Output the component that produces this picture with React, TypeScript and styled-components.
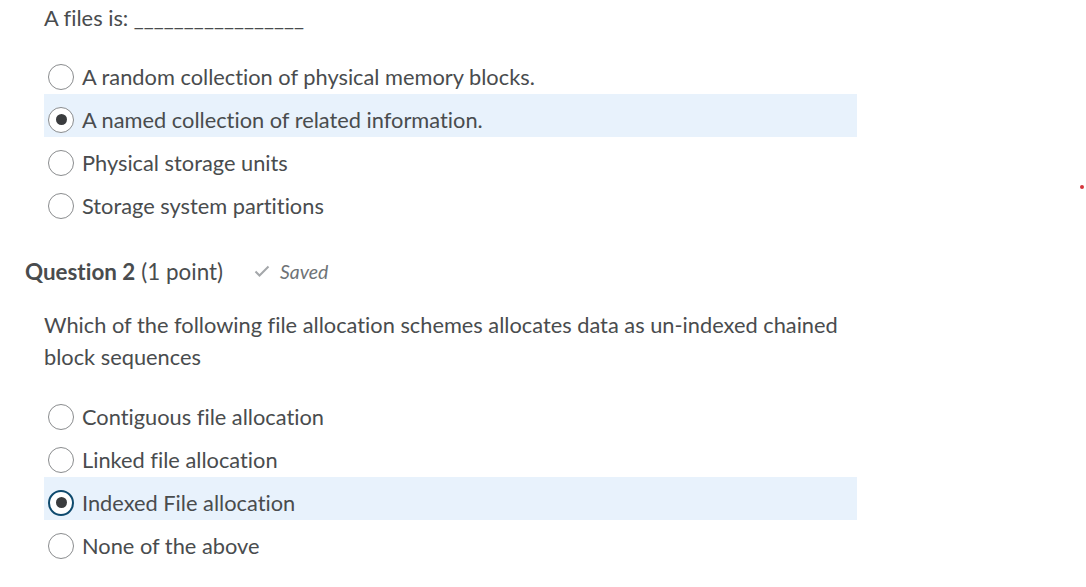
import styled, { createGlobalStyle } from "styled-components";

const GlobalStyle = createGlobalStyle`
  body {
    margin: 0;
    background: #ffffff;
    font-family: Lato, "Open Sans", sans-serif;
    color: #494c4e;
    font-variant-ligatures: none;
  }
`;

const Page = styled.div`
  position: relative;
  width: 1086px;
  height: 587px;
  overflow: hidden;
  padding-left: 25px;
  box-sizing: border-box;
`;

const QuestionBody = styled.div`
  padding-left: 19px;
`;

const Prompt = styled.div<{ $top: number }>`
  font-size: 21.8px;
  line-height: 32px;
  padding-top: ${(p) => p.$top}px;
  width: 820px;
`;

const OptionList = styled.div<{ $top: number }>`
  display: flex;
  flex-direction: column;
  margin-top: ${(p) => p.$top}px;
  width: 813px;
`;

const OptionRow = styled.label<{ $selected?: boolean }>`
  display: flex;
  align-items: center;
  gap: 8px;
  height: 43px;
  box-sizing: border-box;
  padding: 8px 0 0 4px;
  background: ${(p) => (p.$selected ? "#e8f2fc" : "transparent")};
  font-size: 21.8px;
`;

const Radio = styled.span<{ $checked?: boolean; $focused?: boolean }>`
  flex: none;
  width: 26px;
  height: 26px;
  box-sizing: border-box;
  border-radius: 50%;
  border: ${(p) => (p.$focused ? "2.5px solid #0e4a6e" : "1px solid #8a8c8e")};
  background: #ffffff;
  display: flex;
  align-items: center;
  justify-content: center;

  &::after {
    content: "";
    display: ${(p) => (p.$checked ? "block" : "none")};
    width: 11px;
    height: 11px;
    border-radius: 50%;
    background: #3a3c3e;
  }
`;

const Header = styled.div`
  display: flex;
  align-items: center;
  height: 32px;
  margin-top: 32px;
  font-size: 22.4px;
`;

const HeaderTitle = styled.span`
  font-weight: 700;
`;

const HeaderPoints = styled.span`
  margin-left: 6px;
`;

const SavedNote = styled.span`
  display: flex;
  align-items: center;
  gap: 10px;
  margin-left: 31px;
  font-size: 19.4px;
  font-style: italic;
  color: #6e7376;
`;

const Dot = styled.span`
  position: absolute;
  left: 1080px;
  top: 185px;
  width: 4px;
  height: 4px;
  border-radius: 50%;
  background: #d4353b;
`;

const q1 = [
  "A random collection of physical memory blocks.",
  "A named collection of related information.",
  "Physical storage units",
  "Storage system partitions",
];

const q2 = [
  "Contiguous file allocation",
  "Linked file allocation",
  "Indexed File allocation",
  "None of the above",
];

export default function App() {
  return (
    <>
      <GlobalStyle />
      <Page>
        <QuestionBody>
          <Prompt $top={2}>A files is: _________________</Prompt>
          <OptionList $top={17}>
            {q1.map((o, i) => (
              <OptionRow key={o} $selected={i === 1}>
                <Radio $checked={i === 1} />
                {o}
              </OptionRow>
            ))}
          </OptionList>
        </QuestionBody>

        <Header>
          <HeaderTitle>Question 2</HeaderTitle>
          <HeaderPoints>(1 point)</HeaderPoints>
          <SavedNote>
            <svg width="16" height="12" viewBox="0 0 16 12">
              <path d="M1.5 6.5 L5.5 10.5 L14.5 1.5" fill="none" stroke="#a4a7aa" strokeWidth="2" />
            </svg>
            Saved
          </SavedNote>
        </Header>

        <QuestionBody>
          <Prompt $top={22}>
            Which of the following file allocation schemes allocates data as un-indexed chained
            block sequences
          </Prompt>
          <OptionList $top={18}>
            {q2.map((o, i) => (
              <OptionRow key={o} $selected={i === 2}>
                <Radio $checked={i === 2} $focused={i === 2} />
                {o}
              </OptionRow>
            ))}
          </OptionList>
        </QuestionBody>
        <Dot />
      </Page>
    </>
  );
}
